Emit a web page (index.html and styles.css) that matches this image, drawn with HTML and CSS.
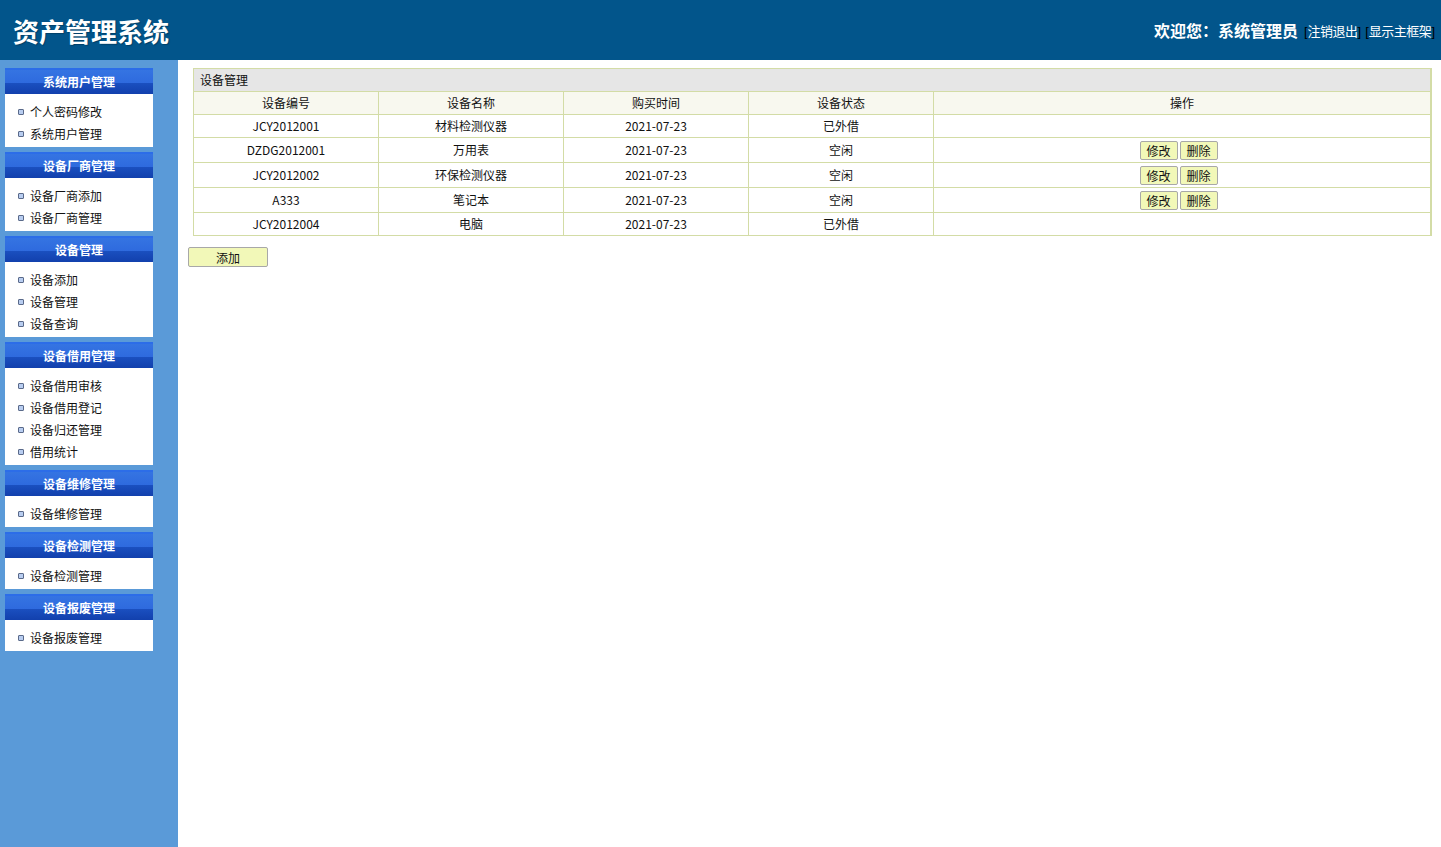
FILE: index.html
```html
<!DOCTYPE html>
<html lang="zh-CN">
<head>
  <meta charset="UTF-8" />
  <title>资产管理系统</title>
  <link rel="stylesheet" href="styles.css">
</head>
<body>

  <header class="top">
    <h1>资产管理系统</h1>
    <div class="user-info">
      <span class="welcome">欢迎您：系统管理员</span>
      <span class="link">[<a href="#">注销退出</a>]</span>
      <span class="link">[<a href="#">显示主框架</a>]</span>
    </div>
  </header>

  <div class="main">
    <aside class="sidebar">
      <div class="menu">
        <div class="menu-title">系统用户管理</div>
        <ul>
          <li>个人密码修改</li>
          <li>系统用户管理</li>
        </ul>
      </div>
      <div class="menu">
        <div class="menu-title">设备厂商管理</div>
        <ul>
          <li>设备厂商添加</li>
          <li>设备厂商管理</li>
        </ul>
      </div>
      <div class="menu">
        <div class="menu-title">设备管理</div>
        <ul>
          <li>设备添加</li>
          <li>设备管理</li>
          <li>设备查询</li>
        </ul>
      </div>
      <div class="menu">
        <div class="menu-title">设备借用管理</div>
        <ul>
          <li>设备借用审核</li>
          <li>设备借用登记</li>
          <li>设备归还管理</li>
          <li>借用统计</li>
        </ul>
      </div>
      <div class="menu">
        <div class="menu-title">设备维修管理</div>
        <ul>
          <li>设备维修管理</li>
        </ul>
      </div>
      <div class="menu">
        <div class="menu-title">设备检测管理</div>
        <ul>
          <li>设备检测管理</li>
        </ul>
      </div>
      <div class="menu">
        <div class="menu-title">设备报废管理</div>
        <ul>
          <li>设备报废管理</li>
        </ul>
      </div>
    </aside>

    <section class="content">
      <table class="grid">
        <tr><td class="caption" colspan="5">设备管理</td></tr>
        <tr class="head">
          <th class="c">设备编号</th>
          <th class="c">设备名称</th>
          <th class="c">购买时间</th>
          <th class="c">设备状态</th>
          <th>操作</th>
        </tr>
        <tr>
          <td>JCY2012001</td><td>材料检测仪器</td><td>2021-07-23</td><td>已外借</td><td></td>
        </tr>
        <tr class="act">
          <td>DZDG2012001</td><td>万用表</td><td>2021-07-23</td><td>空闲</td>
          <td class="ops"><button>修改</button><button>删除</button></td>
        </tr>
        <tr class="act">
          <td>JCY2012002</td><td>环保检测仪器</td><td>2021-07-23</td><td>空闲</td>
          <td class="ops"><button>修改</button><button>删除</button></td>
        </tr>
        <tr class="act">
          <td>A333</td><td>笔记本</td><td>2021-07-23</td><td>空闲</td>
          <td class="ops"><button>修改</button><button>删除</button></td>
        </tr>
        <tr>
          <td>JCY2012004</td><td>电脑</td><td>2021-07-23</td><td>已外借</td><td></td>
        </tr>
      </table>
      <button class="add">添加</button>
    </section>
  </div>

</body>
</html>
```

FILE: styles.css
```css
* {
  box-sizing: border-box;
}

body {
  margin: 0;
  font-family: "Noto Sans CJK SC", "Open Sans", sans-serif;
  font-size: 12px;
  color: #000;
  background: #fff;
}

.top {
  height: 60px;
  background: #02558b;
  color: #fff;
  display: flex;
  align-items: center;
  justify-content: space-between;
  padding: 0 6px 0 13px;
}

.top h1 {
  margin: 0;
  font-size: 26px;
  font-weight: bold;
  text-shadow: 1px 1px 1px rgba(0, 0, 0, 0.25);
}

.user-info {
  display: flex;
  align-items: center;
  gap: 4px;
}

.welcome {
  font-size: 16px;
  font-weight: bold;
  margin-right: 2px;
}

.user-info .link {
  color: #000;
  font-size: 13px;
  font-family: "Liberation Sans", sans-serif;
}

.user-info a {
  color: #fff;
  text-decoration: none;
  letter-spacing: -0.5px;
  font-family: "Noto Sans CJK SC", sans-serif;
}

.main {
  display: flex;
  min-height: 787px;
}

.sidebar {
  width: 178px;
  background: #5a9ad8;
  padding: 8px 25px 0 5px;
  display: flex;
  flex-direction: column;
  gap: 5px;
}

.menu-title {
  height: 26px;
  text-align: center;
  color: #fff;
  font-weight: bold;
  font-size: 12px;
  border-top: 2px solid #2c6de8;
  background: linear-gradient(#3574e2 0%, #2e6ade 55%, #1a4fbf 56%, #1240ad 100%);
  line-height: 23px;
}

.menu ul {
  list-style: none;
  margin: 0;
  padding: 7px 0 2px 0;
  background: #fff;
}

.menu li {
  height: 22px;
  line-height: 22px;
  padding-left: 25px;
  position: relative;
  color: #111;
}

.menu li::before {
  content: "";
  position: absolute;
  left: 13px;
  top: 8px;
  width: 4px;
  height: 4px;
  border: 1px solid #5a6a8a;
  background: #b8cdf0;
  border-radius: 1px;
}

.content {
  flex: 1;
  padding: 8px 9px 0 10px;
}

.grid {
  width: 1239px;
  margin-left: 5px;
  border-collapse: collapse;
  border: 1px solid #d3dca6;
  border-right-width: 2px;
}

.grid td,
.grid th {
  border: 1px solid #d3dca6;
  text-align: center;
  height: 23px;
  padding: 0;
  font-weight: normal;
  color: #111;
  line-height: 20px;
}

.grid th.c {
  width: 185px;
}

.grid .caption {
  background: #e6e6e6;
  text-align: left;
  padding-left: 6px;
}

.grid .head th {
  background: #f8f8ef;
}

.grid .act td {
  height: 25px;
}

.grid .ops {
  padding-right: 7px;
  padding-bottom: 2px;
}

.grid button {
  font-family: inherit;
  font-size: 12px;
  width: 38px;
  height: 19px;
  padding: 0;
  margin: 0 1px;
  background: #f2f8b8;
  border: 1px solid #a8a8a8;
  border-radius: 2px;
  color: #111;
  line-height: 17px;
  vertical-align: middle;
}

.add {
  margin-top: 11px;
  width: 80px;
  height: 20px;
  font-family: inherit;
  font-size: 12px;
  background: #f2f8b8;
  border: 1px solid #a8a8a8;
  border-radius: 2px;
  color: #111;
  padding: 0;
}
```
